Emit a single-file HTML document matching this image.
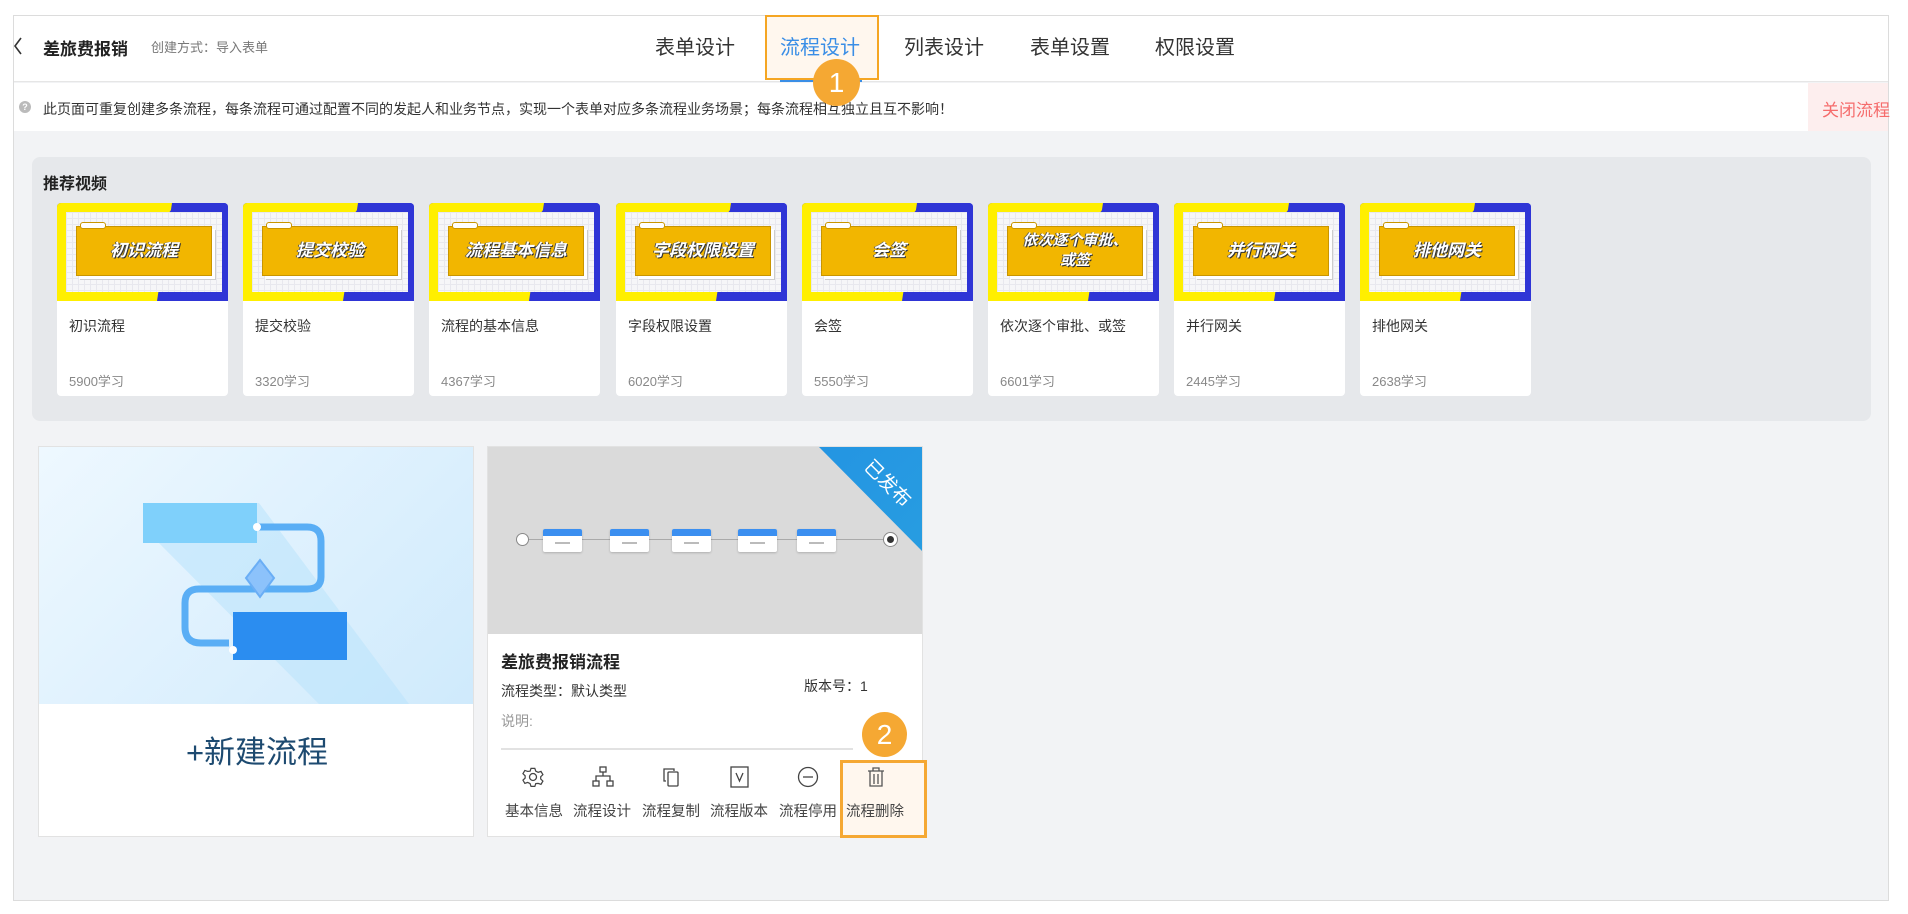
<!DOCTYPE html>
<html><head><meta charset="utf-8">
<style>
*{margin:0;padding:0;box-sizing:border-box}
body{width:1908px;height:914px;background:#fff;font-family:"Liberation Sans","Noto Sans CJK SC",sans-serif;position:relative;overflow:hidden;color:#333}
.a{position:absolute}
.frame{left:13px;top:15px;width:1876px;height:886px;border:1px solid #dcdcdc;background:#f2f3f5}
.tab{position:absolute;top:31px;font-size:20px;color:#333}
.vc{position:absolute;top:203px;width:171px;height:193px;background:#fff;border-radius:4px;overflow:hidden}
.vc .th{position:absolute;left:0;top:0;width:171px;height:98px;background:#2f35d6}
.vc .y1{position:absolute;left:0;top:0;width:171px;height:98px;background:#ffef00;clip-path:polygon(0 0,115px 0,100px 98px,0 98px)}
.vc .y2{position:absolute;left:0;top:0;width:171px;height:98px;background:#2f35d6;clip-path:polygon(120px 0,171px 0,171px 12px,110px 12px)}
.vc .in{position:absolute;left:9px;top:9px;width:156px;height:80px;background:#f6f6f8;background-image:linear-gradient(#e8e8ee 1px,transparent 1px),linear-gradient(90deg,#e8e8ee 1px,transparent 1px);background-size:6px 6px}
.vc .ob{position:absolute;left:10px;top:14px;width:136px;height:50px;background:#f2b600;border:1px solid #c99500;box-shadow:3px 3px 0 #fff,4px 4px 0 #ccc;color:#fff;font-weight:bold;font-style:italic;font-size:17px;text-align:center;line-height:48px;text-shadow:1px 1px 0 #333,-1px 0 0 #555}
.vc .tg{position:absolute;left:14px;top:10px;width:26px;height:7px;background:#fff;border:1px solid #c99500;border-radius:3px}
.vc .t{position:absolute;left:12px;top:113px;font-size:14px;color:#333}
.vc .n{position:absolute;left:12px;top:168px;font-size:13px;color:#888}
.nd{position:absolute;top:528px;width:39px;height:23px;background:#fff;border-radius:2px;box-shadow:0 1px 2px rgba(0,0,0,.2)}
.nd:before{content:"";position:absolute;left:0;top:0;width:100%;height:7px;background:#3b8ff0;border-radius:2px 2px 0 0}
.nd:after{content:"";position:absolute;left:12px;top:13px;width:15px;height:2px;background:#bbb}
.lb{position:absolute;top:800px;font-size:14.5px;color:#444}
.ic{position:absolute;top:766px}
</style></head><body>
<div class="a frame"></div>
<!-- header -->
<div class="a" style="left:14px;top:16px;width:1874px;height:66px;background:#fff;border-bottom:1px solid #e6e6e6"></div>
<svg class="a" style="left:12px;top:36px" width="12" height="20"><path d="M9 2 L3 10 L9 18" fill="none" stroke="#333" stroke-width="1.6"/></svg>
<div class="a" style="left:43px;top:35px;font-size:17px;font-weight:bold;color:#222">差旅费报销</div>
<div class="a" style="left:151px;top:37px;font-size:13px;color:#777">创建方式：导入表单</div>
<div class="a" style="left:765px;top:15px;width:114px;height:65px;background:#fff7ee;border:2px solid #f5a623"></div>
<div class="tab" style="left:655px">表单设计</div>
<div class="tab" style="left:780px;color:#3a8ee6">流程设计</div>
<div class="tab" style="left:904px">列表设计</div>
<div class="tab" style="left:1030px">表单设置</div>
<div class="tab" style="left:1155px">权限设置</div>
<div class="a" style="left:780px;top:80px;width:82px;height:2px;background:#3a8ee6"></div>
<!-- notice -->
<div class="a" style="left:14px;top:83px;width:1874px;height:48px;background:#fff"></div>
<div class="a" style="left:19px;top:101px;width:12px;height:12px;border-radius:50%;background:#bbb;color:#fff;font-size:9px;text-align:center;line-height:12px;font-weight:bold">?</div>
<div class="a" style="left:43px;top:99px;font-size:14px;color:#333">此页面可重复创建多条流程，每条流程可通过配置不同的发起人和业务节点，实现一个表单对应多条流程业务场景；每条流程相互独立且互不影响！</div>
<div class="a" style="left:1808px;top:83px;width:80px;height:48px;background:#fdeeee"></div>
<div class="a" style="left:1822px;top:96px;font-size:17px;color:#f56c6c">关闭流程</div>
<!-- recommend -->
<div class="a" style="left:32px;top:157px;width:1839px;height:264px;background:#e6e8eb;border-radius:8px"></div>
<div class="a" style="left:43px;top:170px;font-size:16px;font-weight:bold;color:#222">推荐视频</div>

<div class="vc" style="left:57px"><div class="th"></div><div class="y1"></div><div class="y2"></div><div class="in"><div class="ob">初识流程</div><div class="tg"></div></div><div class="t">初识流程</div><div class="n">5900学习</div></div>
<div class="vc" style="left:243px"><div class="th"></div><div class="y1"></div><div class="y2"></div><div class="in"><div class="ob">提交校验</div><div class="tg"></div></div><div class="t">提交校验</div><div class="n">3320学习</div></div>
<div class="vc" style="left:429px"><div class="th"></div><div class="y1"></div><div class="y2"></div><div class="in"><div class="ob">流程基本信息</div><div class="tg"></div></div><div class="t">流程的基本信息</div><div class="n">4367学习</div></div>
<div class="vc" style="left:616px"><div class="th"></div><div class="y1"></div><div class="y2"></div><div class="in"><div class="ob">字段权限设置</div><div class="tg"></div></div><div class="t">字段权限设置</div><div class="n">6020学习</div></div>
<div class="vc" style="left:802px"><div class="th"></div><div class="y1"></div><div class="y2"></div><div class="in"><div class="ob">会签</div><div class="tg"></div></div><div class="t">会签</div><div class="n">5550学习</div></div>
<div class="vc" style="left:988px"><div class="th"></div><div class="y1"></div><div class="y2"></div><div class="in"><div class="ob" style="line-height:20px;font-size:15px;padding-top:4px">依次逐个审批、<br>或签</div><div class="tg"></div></div><div class="t">依次逐个审批、或签</div><div class="n">6601学习</div></div>
<div class="vc" style="left:1174px"><div class="th"></div><div class="y1"></div><div class="y2"></div><div class="in"><div class="ob">并行网关</div><div class="tg"></div></div><div class="t">并行网关</div><div class="n">2445学习</div></div>
<div class="vc" style="left:1360px"><div class="th"></div><div class="y1"></div><div class="y2"></div><div class="in"><div class="ob">排他网关</div><div class="tg"></div></div><div class="t">排他网关</div><div class="n">2638学习</div></div>

<!-- new flow card -->
<div class="a" style="left:38px;top:446px;width:436px;height:391px;background:#fff;border:1px solid #e2e2e2;overflow:hidden">
 <div style="position:absolute;left:0;top:0;width:436px;height:257px;background:linear-gradient(135deg,#eef8ff,#cfeafc)"></div>
 <svg style="position:absolute;left:0;top:0" width="436" height="257">
  <polygon points="104,56 220,56 370,257 280,257 104,80" fill="#bde4fb" opacity=".6"/>
  <path d="M210 80 H268 Q282 80 282 94 V130 Q282 142 268 142 H160 Q146 142 146 156 V180 Q146 196 162 196 H190" fill="none" stroke="#5aaef5" stroke-width="7"/>
  <rect x="104" y="56" width="114" height="40" fill="#7fd0fb"/>
  <rect x="194" y="165" width="114" height="48" fill="#2b8df0"/>
  <polygon points="221,113 235,131 221,150 207,131" fill="#8cc2fb" stroke="#6aaef5" stroke-width="2"/>
  <circle cx="218" cy="80" r="4" fill="#fff"/><circle cx="194" cy="203" r="4" fill="#fff"/>
 </svg>
 <div style="position:absolute;left:0;top:280px;width:436px;text-align:center;font-size:31px;color:#1d4a70">+新建流程</div>
</div>
<!-- flow card -->
<div class="a" style="left:487px;top:446px;width:436px;height:391px;background:#fff;border:1px solid #e2e2e2;overflow:hidden">
 <div style="position:absolute;left:0;top:0;width:436px;height:187px;background:#dadada"></div>
 <div style="position:absolute;left:0;top:0;width:436px;height:187px;background:linear-gradient(135deg,#1e88e5,#29a0e0);clip-path:polygon(331px 0,436px 0,436px 106px)"></div>
 <div style="position:absolute;left:372px;top:22px;color:#fff;font-size:19px;transform:rotate(45deg)">已发布</div>
 <div style="position:absolute;left:34px;top:92px;width:370px;height:1px;background:#aaa"></div>
 <div style="position:absolute;left:28px;top:86px;width:13px;height:13px;border-radius:50%;background:#fff;border:1px solid #888"></div>
 <div style="position:absolute;left:396px;top:86px;width:13px;height:13px;border-radius:50%;background:#fff;border:3px solid #fff;box-shadow:0 0 0 1px #888;background:#333"></div>
 <div class="nd" style="left:55px;top:82px"></div><div class="nd" style="left:122px;top:82px"></div><div class="nd" style="left:184px;top:82px"></div><div class="nd" style="left:250px;top:82px"></div><div class="nd" style="left:309px;top:82px"></div>
 <div style="position:absolute;left:13px;top:201px;font-size:17px;font-weight:bold;color:#222">差旅费报销流程</div>
 <div style="position:absolute;left:13px;top:234px;font-size:14px;color:#333">流程类型：默认类型</div>
 <div style="position:absolute;left:316px;top:229px;font-size:14px;color:#333">版本号：1</div>
 <div style="position:absolute;left:13px;top:264px;font-size:14px;color:#999">说明:</div>
 <div style="position:absolute;left:13px;top:301px;width:352px;height:2px;background:#e2e2e2"></div>
</div>
<div class="a" style="left:840px;top:760px;width:87px;height:78px;background:#fff7ee;border:3px solid #f5a833"></div>
<div class="a" style="left:862px;top:712px;width:45px;height:45px;border-radius:50%;background:#f5a833;color:#fff;font-size:28px;text-align:center;line-height:45px">2</div>
<!-- icons -->
<svg class="ic" style="left:522px" width="22" height="22" viewBox="0 0 22 22"><path d="M9 2h4l1 3 2.5 1.2 3-1 2 3.4-2.3 2.2v2.4l2.3 2.2-2 3.4-3-1L14 18l-1 3H9l-1-3-2.5-1.2-3 1-2-3.4L2.8 12.2V9.8L.5 7.6l2-3.4 3 1L8 5z" fill="none" stroke="#444" stroke-width="1.3" transform="scale(.95) translate(.5 .5)"/><circle cx="11" cy="11" r="3.5" fill="none" stroke="#444" stroke-width="1.3"/></svg>
<svg class="ic" style="left:592px" width="22" height="22" viewBox="0 0 22 22" fill="none" stroke="#444" stroke-width="1.3"><rect x="8" y="1" width="6" height="5"/><rect x="1" y="15" width="6" height="5"/><rect x="15" y="15" width="6" height="5"/><path d="M11 6v4M4 15v-5h14v5"/></svg>
<svg class="ic" style="left:661px" width="22" height="22" viewBox="0 0 22 22" fill="none" stroke="#444" stroke-width="1.3"><path d="M5 15H3V3h10v2"/><rect x="7" y="6" width="10" height="14" rx="1"/></svg>
<svg class="ic" style="left:729px" width="22" height="24" viewBox="0 0 22 24" fill="none" stroke="#444" stroke-width="1.3"><rect x="2" y="1" width="17" height="20"/><path d="M7 7l3.5 8L14 7"/></svg>
<svg class="ic" style="left:797px" width="22" height="22" viewBox="0 0 22 22" fill="none" stroke="#444" stroke-width="1.3"><circle cx="11" cy="11" r="9.5"/><path d="M6 11h10"/></svg>
<svg class="ic" style="left:865px" width="22" height="22" viewBox="0 0 22 22" fill="none" stroke="#555" stroke-width="1.3"><path d="M3 5h16M8 5V2h6v3M5 5v15h12V5M9 8v10M13 8v10"/></svg>
<div class="lb" style="left:505px">基本信息</div>
<div class="lb" style="left:573px">流程设计</div>
<div class="lb" style="left:642px">流程复制</div>
<div class="lb" style="left:710px">流程版本</div>
<div class="lb" style="left:779px">流程停用</div>
<div class="lb" style="left:846px">流程删除</div>
<div class="a" style="left:813px;top:59px;width:47px;height:47px;border-radius:50%;background:#f5a833;color:#fff;font-size:28px;text-align:center;line-height:47px">1</div>
</body></html>
